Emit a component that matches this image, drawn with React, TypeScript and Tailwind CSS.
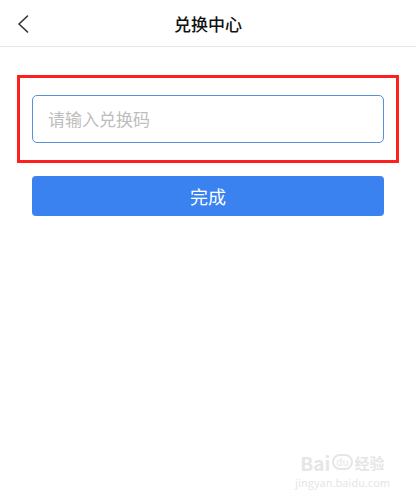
export default function App() {
  return (
    <div
      className="w-[416px] h-[500px] bg-white relative overflow-hidden"
      style={{ fontFamily: '"Noto Sans CJK SC", "Noto Sans", sans-serif' }}
    >
      {/* Header */}
      <div className="h-[47px] border-b border-[#e5e5e5] flex items-center relative">
        <button className="absolute left-[14px] top-[13px] w-[18px] h-[22px] flex items-center justify-center">
          <svg width="14" height="20" viewBox="0 0 14 20" fill="none">
            <path d="M11.5 2 L3 10 L11.5 18" stroke="#333" strokeWidth="1.6" strokeLinecap="round" strokeLinejoin="round" />
          </svg>
        </button>
        <div className="flex-1 text-center text-[17px] font-medium text-[#111] leading-none">兑换中心</div>
      </div>

      {/* Content */}
      <div className="px-[17px] pt-[28px]">
        <div className="border-[3px] border-[#ff1f1f] px-[12px] py-[17px]">
          <div className="h-[48px] border border-[#5a8fdc] rounded-[5px] flex items-center px-[15px]">
            <span className="text-[17px] text-[#bdbdbd]">请输入兑换码</span>
          </div>
        </div>
        <div className="px-[15px] pt-[13px]">
          <button className="w-full h-[40px] rounded-[4px] bg-[#3b82f1] text-white text-[18px] flex items-center justify-center">
            完成
          </button>
        </div>
      </div>

      {/* Watermark */}
      <div className="absolute right-[26px] bottom-[12px] flex flex-col items-center text-[#e6e6e6] leading-none">
        <div className="flex items-center gap-[2px] h-[20px]">
          <span className="text-[19px] font-bold">Bai</span>
          <span className="text-[10px] border-[2px] border-[#e6e6e6] rounded-full px-[2px] py-[1px]">du</span>
          <span className="text-[15px] font-bold">经验</span>
        </div>
        <div className="text-[11px] mt-[5px]">jingyan.baidu.com</div>
      </div>
    </div>
  );
}
